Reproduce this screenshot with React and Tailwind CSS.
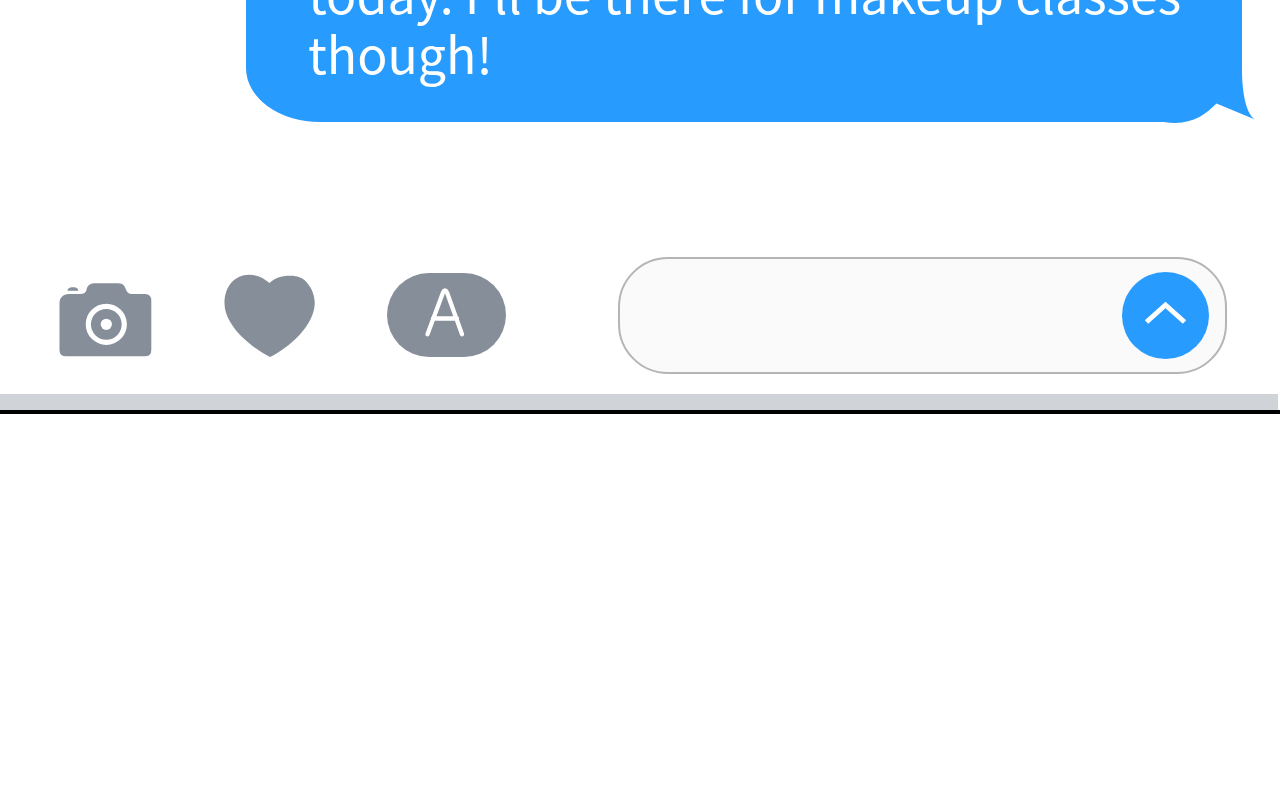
function CameraIcon() {
  return (
    <svg viewBox="0 0 94 85" className="block h-[85px] w-[94px]" aria-hidden="true">
      <path
        fill="#868e99"
        d="M1.500 30 C1.500 25 5 21.200 11 21 H22 C26 21 28 19.500 28.500 17 C29 13 32 10.300 37 10.300 H60 C64 10.300 66.500 12 67.500 15.500 C68.500 19 70.500 21 74 21 H87 Q93.300 21 93.300 27.500 V77 Q93.300 83.300 87 83.300 H8 Q1.500 83.300 1.500 77 Z"
      />
      <path d="M9.500 17.800 C9.500 15.500 11.500 14.200 14 14.200 H16 C18.500 14.200 20.300 15.500 20.300 17.800 Z" fill="#868e99" />
      <circle cx="48.300" cy="51.300" r="18" fill="none" stroke="white" strokeWidth="5.200" />
      <circle cx="48.300" cy="51.300" r="5.600" fill="white" />
    </svg>
  );
}

function HeartIcon() {
  return (
    <svg viewBox="0 0 92 85" className="block h-[85px] w-[92px]" aria-hidden="true">
      <path
        fill="#868e99"
        d="M45.500 10 C51 5 57 2.700 66 2.700 C74 2.700 80 5 84 11 C88 16 90.700 23 90.700 30 C90.700 52 65 75 46 84 C25 73 0.500 52 0.500 30 C0.500 13 11 1.700 25 1.700 C33 1.700 40 5 45.500 10 Z"
      />
    </svg>
  );
}

function AppsIcon() {
  return (
    <svg viewBox="0 0 119 85" className="block h-[85px] w-[119px]" aria-hidden="true">
      <rect width="119" height="84" rx="42" ry="42" fill="#868e99" />
      <path
        d="M40.500 61.300 L56 19.500 Q58 15.500 60 19.500 L75 61.300 M46 45.500 H70"
        fill="none"
        stroke="white"
        strokeWidth="4.300"
        strokeLinecap="round"
        strokeLinejoin="round"
      />
    </svg>
  );
}

function BubbleTail() {
  return (
    <svg
      viewBox="0 0 100 84"
      className="absolute -right-[14px] -bottom-[2px] h-[84px] w-[100px]"
      aria-hidden="true"
    >
      <path
        fill="#289bff"
        d="M0 0 H86 V30 C86 52 90 74 99 79.500 L60.500 63.500 C48 76 34 86 8 82 H0 Z"
      />
    </svg>
  );
}

export default function App() {
  return (
    <main className="min-h-screen bg-white font-['Noto_Sans_CJK_SC','Open_Sans',sans-serif]">
      <section className="flex h-[124px] items-end overflow-hidden pr-[38px] pb-[2px] pl-[246px]">
        <div className="relative w-full rounded-br-[80px] rounded-bl-[74px_54px] bg-[#289bff] pt-10 pr-10 pb-10 pl-[62px]">
          <BubbleTail />
          <p className="relative text-[50px] leading-[60px] text-white">
            today. I'll be there for makeup classes though!
          </p>
        </div>
      </section>

      <form
        className="mt-[133px] flex items-center pr-[53px] pl-[58px]"
        onSubmit={(event) => event.preventDefault()}
      >
        <button type="button" aria-label="Camera" className="mr-[72px] shrink-0">
          <CameraIcon />
        </button>
        <button type="button" aria-label="Digital Touch" className="mr-[71px] shrink-0">
          <HeartIcon />
        </button>
        <button type="button" aria-label="Apps" className="mr-28 shrink-0">
          <AppsIcon />
        </button>
        <div className="flex h-[117px] min-w-0 grow items-center rounded-[50px] border-2 border-[#b5b5b6] bg-[#fafafa] pr-4 pl-10">
          <input
            type="text"
            aria-label="Message"
            className="min-w-0 grow bg-transparent text-[50px] leading-[60px] outline-none"
          />
          <button
            type="submit"
            aria-label="Send"
            className="flex size-[87px] shrink-0 items-center justify-center rounded-full bg-[#289bff]"
          >
            <svg viewBox="0 0 43 30" className="h-[30px] w-[43px]" aria-hidden="true">
              <path d="M2.500 21 L21.500 4 L40.500 21" fill="none" stroke="white" strokeWidth="5" />
            </svg>
          </button>
        </div>
      </form>

      <div className="mt-5 mr-[2px] h-4 bg-[#d0d4d9]" />
      <div className="h-1 bg-black" />
    </main>
  );
}
